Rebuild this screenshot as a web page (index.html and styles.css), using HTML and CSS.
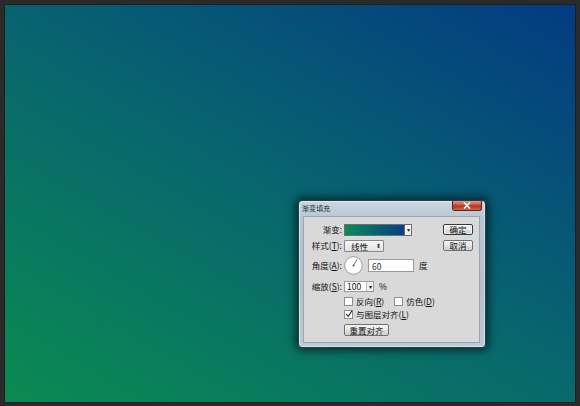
FILE: index.html
```html
<!DOCTYPE html>
<html>
<head>
<meta charset="utf-8">
<link rel="stylesheet" href="styles.css">
</head>
<body>
<div class="frame">
  <div class="canvas">
    <div class="dialog">
      <div class="titlebar">
        <span class="title">渐变填充</span>
        <span class="close"><svg width="8" height="7" viewBox="0 0 8 7"><path d="M1 0.5 L7 6.5 M7 0.5 L1 6.5" stroke="#fff" stroke-width="1.6"/></svg></span>
      </div>
      <div class="client">
        <div class="left">
          <div class="row r1">
            <span class="label">渐变:</span>
            <span class="swatch"></span><span class="drop">▾</span>
          </div>
          <div class="row r2">
            <span class="label">样式(<u>T</u>):</span>
            <span class="select">线性<span class="updown">⬍</span></span>
          </div>
          <div class="row r3">
            <span class="label">角度(<u>A</u>):</span>
            <span class="dial"><svg width="19" height="19" viewBox="0 0 19 19"><circle cx="9.5" cy="9.5" r="8.8" fill="#fff" stroke="#8a8a8a" stroke-width="0.8"/><path d="M9.5 9.5 L13.2 3.1" stroke="#555" stroke-width="0.8"/><circle cx="9.5" cy="9.5" r="0.9" fill="#444"/></svg></span>
            <span class="input angle">60</span>
            <span class="unit">度</span>
          </div>
          <div class="row r4">
            <span class="label">缩放(<u>S</u>):</span>
            <span class="combo"><span class="cval">100</span><span class="cdrop">▾</span></span>
            <span class="unit pct">%</span>
          </div>
          <div class="row r5 chk">
            <span class="box"></span><span class="ct">反向(<u>R</u>)</span>
            <span class="box b2"></span><span class="ct">仿色(<u>D</u>)</span>
          </div>
          <div class="row r6 chk">
            <span class="box"><svg width="8" height="8" viewBox="0 0 8 8"><path d="M1.2 4 L3.2 6.3 L7 0.8" fill="none" stroke="#222" stroke-width="1.1"/></svg></span><span class="ct">与图层对齐(<u>L</u>)</span>
          </div>
          <div class="row r7 chk">
            <span class="btn reset">重置对齐</span>
          </div>
        </div>
        <div class="right">
          <span class="btn ok">确定</span>
          <span class="btn cancel">取消</span>
        </div>
      </div>
    </div>
  </div>
</div>
</body>
</html>
```
FILE: styles.css
```css
html, body {
  margin: 0;
  padding: 0;
  background: #2a2a2a;
  width: 580px;
  height: 406px;
  overflow: hidden;
  font-family: "Noto Sans CJK SC", "Liberation Sans", sans-serif;
}
.frame {
  padding: 5px 5px 4px 5px;
}
.canvas {
  position: relative;
  width: 570px;
  height: 397px;
  background: linear-gradient(30deg, #0a8b51 0%, #08666e 50%, #033b82 100%);
  box-shadow: 0 0 0 1px #1e1e1e;
}
.dialog {
  position: absolute;
  left: 293px;
  top: 195px;
  width: 186px;
  height: 146px;
  border: 1px solid #2c3a44;
  border-radius: 4px;
  background: linear-gradient(180deg, #cad7e1 0%, #b6c6d2 12%, #b0c0cc 60%, #bccbd6 100%);
  box-shadow: 0 0 9px 3px rgba(0,0,0,0.55), inset 0 0 0 1px rgba(255,255,255,0.45);
  display: flex;
  flex-direction: column;
}
.titlebar {
  height: 15px;
  display: flex;
  align-items: flex-start;
  justify-content: space-between;
}
.title {
  font-size: 7px;
  color: #1e2a33;
  margin: 3px 0 0 3px;
  line-height: 9px;
  letter-spacing: 0.1px;
}
.close {
  width: 28px;
  height: 9px;
  margin-right: 3px;
  border: 1px solid #5a2520;
  border-top: none;
  border-radius: 0 0 3px 3px;
  background: linear-gradient(180deg, #e49a88 0%, #c9503e 45%, #b3301f 55%, #cf6a4f 100%);
  display: flex;
  align-items: center;
  justify-content: center;
}
.close svg { display: block; }
.client {
  margin: 0 5px 4px 4px;
  flex: 1;
  background: #d9d9d9;
  border: 1px solid #97a6b1;
  display: flex;
  font-size: 8.5px;
  color: #111;
  line-height: 11px;
}
.left {
  padding-top: 7px;
  width: 138px;
  display: flex;
  flex-direction: column;
}
.row {
  display: flex;
  align-items: center;
}
.label {
  width: 38px;
  text-align: right;
  margin-right: 2px;
  white-space: nowrap;
}
u { text-decoration: underline; }
.r1 { height: 11px; }
.r2 { height: 11px; margin-top: 5px; }
.r3 { height: 19px; margin-top: 5px; }
.r4 { height: 11px; margin-top: 6px; }
.r5 { height: 9px; margin-top: 5px; }
.r6 { height: 9px; margin-top: 4px; }
.r7 { height: 12px; margin-top: 5px; }
.chk { padding-left: 40px; }
.swatch {
  width: 59px;
  height: 10px;
  border: 1px solid #6d6d6d;
  background: linear-gradient(90deg, #0a8b56, #083f86);
}
.drop {
  width: 6px;
  height: 10px;
  border: 1px solid #6d6d6d;
  border-left: none;
  background: #f3f3f3;
  font-size: 6px;
  line-height: 10px;
  text-align: center;
  color: #222;
}
.select {
  width: 32px;
  height: 10px;
  border: 1px solid #8a8a8a;
  border-radius: 1px;
  background: linear-gradient(180deg, #f7f7f7, #e3e3e3);
  padding-left: 6px;
  line-height: 10px;
  position: relative;
  display: flex;
  justify-content: space-between;
}
.updown {
  font-size: 6px;
  margin-right: 2px;
  color: #333;
}
.dial {
  width: 19px;
  height: 19px;
  margin-right: 5px;
}
.dial svg { display: block; }
.input {
  height: 11px;
  border: 1px solid #9a9a9a;
  background: #fff;
  padding-left: 3px;
  line-height: 11px;
  box-sizing: border-box;
}
.angle {
  width: 46px;
  height: 13px;
  line-height: 12px;
  color: #333;
}
.unit { margin-left: 5px; }
.combo {
  display: flex;
  width: 30px;
  height: 11px;
  border: 1px solid #9a9a9a;
  box-sizing: border-box;
  background: #fff;
}
.cval {
  width: 19px;
  padding-left: 2px;
  line-height: 9px;
  border-right: 1px solid #bbb;
}
.cdrop {
  flex: 1;
  font-size: 6px;
  text-align: center;
  line-height: 9px;
  background: #f0f0f0;
}
.pct { margin-left: 5px; }
.box {
  width: 7px;
  height: 7px;
  border: 1px solid #8e8e8e;
  background: #fff;
  margin-right: 3px;
  position: relative;
}
.box svg {
  position: absolute;
  left: 0;
  top: -1px;
}
.b2 { margin-left: 10px; }
.ct { white-space: nowrap; }
.btn {
  display: flex;
  align-items: center;
  justify-content: center;
  border: 1px solid #707070;
  border-radius: 2px;
  background: linear-gradient(180deg, #f4f4f4 0%, #e8e8e8 50%, #dcdcdc 51%, #d4d4d4 100%);
  box-sizing: border-box;
  font-size: 8.5px;
}
.reset {
  width: 45px;
  height: 12px;
}
.right {
  padding-top: 7px;
  padding-left: 1px;
  display: flex;
  flex-direction: column;
  gap: 5px;
}
.ok, .cancel {
  width: 30px;
  height: 11px;
}
.ok { border-color: #3a3a3a; box-shadow: inset 0 0 0 1px #f6f6f6; }
```
